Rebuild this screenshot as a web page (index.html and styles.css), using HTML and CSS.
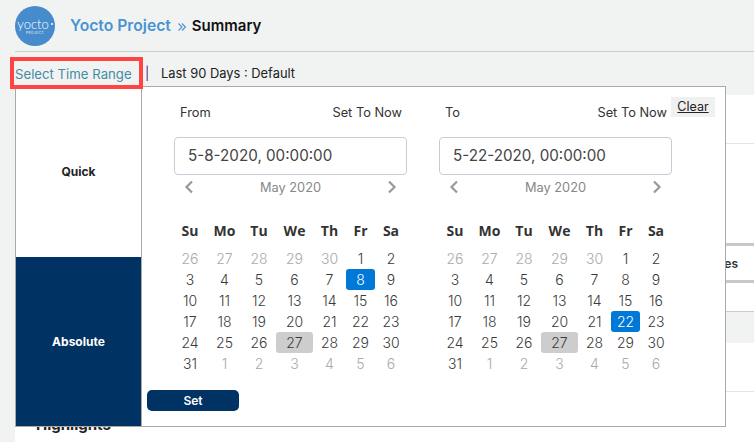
FILE: index.html
```html
<!DOCTYPE html>
<html lang="en">
<head>
  <meta charset="UTF-8" />
  <meta name="viewport" content="width=device-width, initial-scale=1.0" />
  <title>Yocto Project Summary</title>
  <link rel="stylesheet" href="styles.css">
</head>
<body>

  <div id="header">
    <div class="logo">
      <span class="logo-name">yocto<i class="logo-dot"></i></span>
      <span class="logo-sub">PROJECT</span>
    </div>
    <span class="crumb">Yocto Project</span>
    <svg class="crumb-sep" width="10" height="10" viewBox="0 0 10 10"><path d="M1.5 1.5 5 5 1.5 8.5M5 1.5 8.5 5 5 8.5" fill="none" stroke="#4a90d0" stroke-width="1.1"/></svg>
    <span class="crumb-now">Summary</span>
  </div>

  <div id="range">
    <span class="range-link">Select Time Range</span>
    <span class="range-sep">|</span>
    <span class="range-value">Last 90 Days : Default</span>
  </div>

  <div id="content">
    <div class="block block-top"></div>
    <div class="block block-mid"></div>
    <div class="block block-tabs">Issues</div>
    <div class="block block-plain"></div>
    <div class="block block-band"></div>
    <div class="block block-low"></div>
    <h2 class="highlights">Highlights</h2>
  </div>

  <div class="red-box"></div>

  <div id="picker">
    <div class="tabs">
      <div class="tab">Quick</div>
      <div class="tab active">Absolute</div>
    </div>
    <div class="pane">
      <div class="cals">
        <div class="cal" id="from"></div>
        <div class="cal" id="to"></div>
      </div>
      <button class="set-btn">Set</button>
    </div>
    <a class="clear">Clear</a>
  </div>

  <script src="script.js"></script>
</body>
</html>
```

FILE: styles.css
```css
body {
  margin: 0;
  width: 754px;
  height: 442px;
  overflow: hidden;
  position: relative;
  background: #f1f3f3;
  color: #222;
  font-family: Inter, "Liberation Sans", sans-serif;
}

#header {
  margin-left: 15px;
  height: 51px;
  border-bottom: 1px solid #ccc;
  display: flex;
  align-items: center;
}

.logo {
  width: 40px;
  height: 40px;
  border-radius: 50%;
  background: #468bcb;
  color: white;
  display: flex;
  flex-direction: column;
  align-items: center;
  justify-content: center;
  margin-right: 15px;
  margin-top: 1px;
}

.logo-name {
  font-family: Lato, sans-serif;
  font-weight: 300;
  font-size: 13px;
  line-height: 12px;
  display: flex;
  align-items: center;
}

.logo-dot {
  width: 2px;
  height: 2px;
  margin-left: 2px;
  border-radius: 50%;
  background: white;
}

.logo-sub {
  font-size: 3px;
  line-height: 4px;
  letter-spacing: 0.6px;
  margin-top: 1px;
}

.crumb {
  font-size: 15.7px;
  font-weight: 600;
  color: #4a93d2;
}

.crumb-sep {
  margin: 2px 5px 0 6px;
}

.crumb-now {
  font-size: 15px;
  font-weight: 600;
  color: #111;
}

#range {
  margin-left: 15px;
  height: 43px;
  display: flex;
  align-items: center;
  font-size: 12.9px;
  font-weight: 400;
}

.range-link {
  width: 130px;
  font-size: 13.2px;
  color: #458ba3;
  white-space: nowrap;
}

.range-sep {
  width: 16px;
  color: #5a1a8a;
}

.range-value {
  color: #222;
}

#content {
  margin-left: 15px;
  background: white;
  height: 347px;
}

.block {
  box-sizing: border-box;
}

.block-top {
  height: 49px;
  border-bottom: 1px solid #e4e4e4;
}

.block-mid {
  height: 102px;
  border-bottom: 3px solid #c8c8c8;
}

.block-tabs {
  height: 37px;
  border-bottom: 3px solid #c8c8c8;
  text-align: right;
  padding-right: 16px;
  line-height: 36px;
  font-size: 12px;
  font-weight: 600;
  color: #333;
}

.block-plain {
  height: 29px;
  border-bottom: 1px solid #ccc;
}

.block-band {
  height: 31px;
  background: #f1f3f3;
}

.block-low {
  height: 49px;
  border-bottom: 1px solid #e4e4e4;
}

.highlights {
  margin: 24px 0 0 21px;
  font-size: 15px;
  line-height: 18px;
  font-weight: 700;
  color: #222;
}

.red-box {
  position: absolute;
  left: 10px;
  top: 57px;
  width: 133px;
  height: 32px;
  border: 4px solid #ff4444;
  box-sizing: border-box;
  z-index: 2;
}

#picker {
  position: absolute;
  left: 15px;
  top: 86px;
  width: 711px;
  height: 341px;
  box-sizing: border-box;
  background: white;
  border: 1px solid #aaa;
  display: flex;
  z-index: 1;
}

.tabs {
  width: 126px;
  flex: none;
  display: flex;
  flex-direction: column;
  border-right: 1px solid #aaa;
  box-sizing: border-box;
}

.tab {
  flex: 1;
  display: flex;
  align-items: center;
  justify-content: center;
  font-size: 12px;
  font-weight: 700;
  color: #222;
}

.tab.active {
  background: #003263;
  color: white;
}

.pane {
  flex: 1;
}

.cals {
  display: flex;
  gap: 31px;
  padding-left: 31px;
}

.cal {
  width: 234px;
}

.cal-head {
  display: flex;
  justify-content: space-between;
  height: 50px;
  padding: 18px 5px 0 7px;
  box-sizing: border-box;
  font-size: 12.8px;
  line-height: 16px;
  color: #333;
}

.cal-input {
  margin-left: 1px;
  height: 38px;
  width: 233px;
  border: 1px solid #c9ccd6;
  border-radius: 4px;
  box-sizing: border-box;
  padding-left: 13px;
  line-height: 36px;
  font-size: 15.2px;
  color: #444;
}

.cal-month {
  display: flex;
  align-items: center;
  justify-content: space-between;
  height: 24px;
  padding: 0 9px 0 10px;
  font-size: 12.8px;
  color: #888;
}

.week,
.days {
  display: grid;
  grid-template-columns: 34px 35px 34px 37px 33px 29px 32px;
  text-align: center;
}

.week {
  margin-top: 19px;
  height: 30px;
  line-height: 26px;
  font-family: "Open Sans", sans-serif;
  font-size: 14px;
  font-weight: 700;
  color: #333;
}

.day {
  height: 21px;
  line-height: 21px;
  font-size: 14px;
  font-weight: 300;
  color: #3a3a3a;
  border-radius: 3px;
}

.day.muted {
  color: #aaa;
}

.day.today {
  background: #cdcdcd;
}

.day.picked {
  background: #0078d7;
  color: white;
}

.set-btn {
  display: block;
  margin: 16px 0 0 5px;
  width: 92px;
  height: 21px;
  padding: 0;
  border: none;
  border-radius: 5px;
  background: #003263;
  color: white;
  font-family: inherit;
  font-size: 12px;
  font-weight: 600;
}

.clear {
  position: absolute;
  left: 655px;
  top: 10px;
  width: 44px;
  height: 20px;
  background: #f0f0f0;
  text-align: center;
  font-size: 12.5px;
  line-height: 20px;
  color: #222;
  text-decoration: underline;
}
```

FILE: script.js
```js
const weekNames = ['Su', 'Mo', 'Tu', 'We', 'Th', 'Fr', 'Sa'];
const before = [26, 27, 28, 29, 30];
const after = [1, 2, 3, 4, 5, 6];

const chevron = (d) =>
  `<svg width="12" height="14" viewBox="0 0 12 14"><path d="${d}" fill="none" stroke="#999" stroke-width="2.2"/></svg>`;

function buildCal(id, label, value, picked) {
  let days = '';
  before.forEach(d => { days += `<div class="day muted">${d}</div>`; });
  for (let d = 1; d <= 31; d++) {
    let cls = 'day';
    if (d === picked) cls += ' picked';
    if (d === 27) cls += ' today';
    days += `<div class="${cls}">${d}</div>`;
  }
  after.forEach(d => { days += `<div class="day muted">${d}</div>`; });

  document.getElementById(id).innerHTML = `
    <div class="cal-head"><span>${label}</span><span>Set To Now</span></div>
    <div class="cal-input">${value}</div>
    <div class="cal-month">
      ${chevron('M9 1.5 3.5 7 9 12.5')}
      <span>May 2020</span>
      ${chevron('M3 1.5 8.5 7 3 12.5')}
    </div>
    <div class="week">${weekNames.map(w => `<div>${w}</div>`).join('')}</div>
    <div class="days">${days}</div>`;
}

buildCal('from', 'From', '5-8-2020, 00:00:00', 8);
buildCal('to', 'To', '5-22-2020, 00:00:00', 22);
```
